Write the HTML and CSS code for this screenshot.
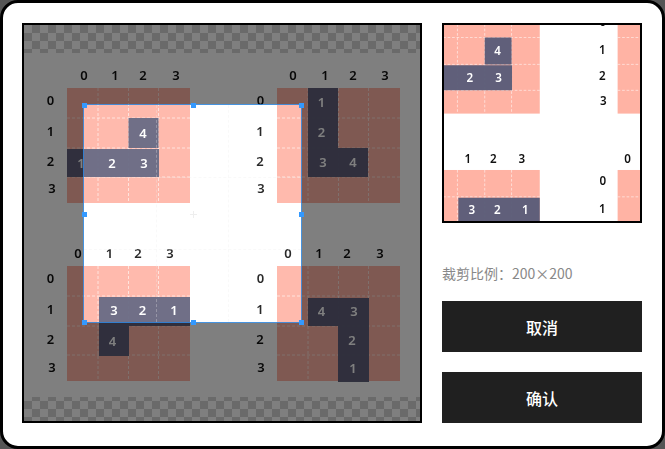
FILE: index.html
```html
<!DOCTYPE html>
<html lang="zh">
  <head>
    <meta charset="utf-8">
    <title>裁剪图片</title>
    <link rel="stylesheet" href="styles.css">
  </head>
  <body>
    <div class="modal">
      <div class="cropper">
        <!-- the picture being cropped, drawn in page coordinates -->
        <svg class="art" viewBox="24 25 396 396">
          <defs>
            <pattern id="checker" x="24" y="25" width="16" height="16" patternUnits="userSpaceOnUse">
              <rect class="tile-light" width="16" height="16" />
              <rect class="tile-dark" x="8" width="8" height="8" />
              <rect class="tile-dark" y="8" width="8" height="8" />
            </pattern>
            <g id="field">
              <rect class="pink" width="123" height="115" />
              <path class="dash" d="M31 0V115M61.5 0V115M91.5 0V115M0 30H123M0 60H123M0 89H123" />
            </g>
          </defs>
          <g id="picture">
            <rect class="paper" x="24" y="25" width="396" height="396" />
            <rect fill="url(#checker)" x="24" y="25" width="396" height="28" />
            <rect fill="url(#checker)" x="24" y="397" width="396" height="24" />

            <!-- board top left -->
            <use href="#field" x="67" y="88" />
            <path class="slate" d="M128.5 118H158.5V148H128.5ZM67 149H159V177H67Z" />
            <text class="head" x="84" y="80">0</text>
            <text class="head" x="115" y="80">1</text>
            <text class="head" x="143" y="80">2</text>
            <text class="head" x="176" y="80">3</text>
            <text class="head" x="50.500" y="105">0</text>
            <text class="head" x="50.500" y="136">1</text>
            <text class="head" x="50.500" y="166">2</text>
            <text class="head" x="52" y="193">3</text>
            <text class="num" x="81" y="168">1</text>
            <text class="num" x="112" y="168">2</text>
            <text class="num" x="144" y="168">3</text>
            <text class="num" x="143" y="138">4</text>

            <!-- board top right -->
            <use href="#field" x="277" y="88" />
            <path class="slate" d="M308 88H338V148H368V177H308Z" />
            <text class="head" x="293" y="80">0</text>
            <text class="head" x="325" y="80">1</text>
            <text class="head" x="353" y="80">2</text>
            <text class="head" x="385" y="80">3</text>
            <text class="head" x="260.500" y="105">0</text>
            <text class="head" x="260" y="136">1</text>
            <text class="head" x="260" y="166">2</text>
            <text class="head" x="261" y="193">3</text>
            <text class="num" x="321.500" y="107">1</text>
            <text class="num" x="321.500" y="137">2</text>
            <text class="num" x="323" y="167">3</text>
            <text class="num" x="353" y="167">4</text>

            <!-- board bottom left -->
            <use href="#field" x="67" y="266" />
            <path class="slate" d="M99 297H190V326H129V356H99Z" />
            <text class="head" x="78" y="258">0</text>
            <text class="head" x="109.500" y="258">1</text>
            <text class="head" x="138" y="258">2</text>
            <text class="head" x="170" y="258">3</text>
            <text class="head" x="50.500" y="283">0</text>
            <text class="head" x="50.500" y="314">1</text>
            <text class="head" x="50.500" y="344">2</text>
            <text class="head" x="52" y="372">3</text>
            <text class="num" x="114" y="315">3</text>
            <text class="num" x="142.500" y="315">2</text>
            <text class="num" x="174" y="315">1</text>
            <text class="num" x="112.500" y="346">4</text>

            <!-- board bottom right -->
            <use href="#field" x="277" y="266" />
            <path class="slate" d="M308 298H369V382H338V326H308Z" />
            <text class="head" x="288" y="258">0</text>
            <text class="head" x="319" y="258">1</text>
            <text class="head" x="347" y="258">2</text>
            <text class="head" x="380" y="258">3</text>
            <text class="head" x="260.500" y="283">0</text>
            <text class="head" x="260" y="314">1</text>
            <text class="head" x="260" y="344">2</text>
            <text class="head" x="261" y="372">3</text>
            <text class="num" x="321.500" y="316">4</text>
            <text class="num" x="354" y="316">3</text>
            <text class="num" x="352" y="345">2</text>
            <text class="num" x="353" y="372.500">1</text>
          </g>
        </svg>

        <div class="crop-box">
          <span class="guide guide-h"></span>
          <span class="guide guide-v"></span>
          <span class="cross"></span>
          <span class="point p-n"></span>
          <span class="point p-e"></span>
          <span class="point p-s"></span>
          <span class="point p-w"></span>
          <span class="point p-nw"></span>
          <span class="point p-ne"></span>
          <span class="point p-se"></span>
          <span class="point p-sw"></span>
        </div>
      </div>

      <div class="side">
        <div class="preview">
          <svg class="art" viewBox="83 104 219 219">
            <use href="#picture" />
          </svg>
        </div>
        <p class="ratio">裁剪比例：200×200</p>
        <button class="btn" type="button">取消</button>
        <button class="btn" type="button">确认</button>
      </div>
    </div>
  </body>
</html>
```

FILE: styles.css
```css
* {
  box-sizing: border-box;
}
html, body {
  margin: 0;
  height: 100%;
  background: #555;
}
.modal {
  display: flex;
  gap: 20px;
  width: 665px;
  height: 449px;
  padding: 20px 20px 20px 19px;
  background: #fff;
  border: 3px solid #000;
  border-radius: 18px;
  font-family: "Noto Sans CJK SC", "Noto Sans", sans-serif;
}

/* cropper */
.cropper {
  position: relative;
  flex: none;
  width: 400px;
  height: 400px;
  border: 2px solid #000;
  overflow: hidden;
}
.art {
  display: block;
  width: 100%;
  height: 100%;
  filter: blur(0.4px);
}
.paper, .tile-light {
  fill: #fff;
}
.tile-dark {
  fill: #d4d4d4;
}
.pink {
  fill: #ffb3a4;
}
.slate {
  fill: #5a5c78;
  fill-opacity: 0.96;
}
.dash {
  fill: none;
  stroke: #fff;
  stroke-opacity: 0.6;
  stroke-dasharray: 3 2;
}
.head, .num {
  font-family: "Noto Sans", sans-serif;
  font-size: 13px;
  font-weight: 600;
  text-anchor: middle;
}
.head {
  fill: #111;
}
.num {
  fill: #fff;
}

.crop-box {
  position: absolute;
  left: 60px;
  top: 80px;
  width: 217px;
  height: 217px;
  background: rgba(255, 255, 255, 0.1);
  outline: 1px solid rgba(51, 153, 255, 0.75);
  box-shadow: 0 0 0 400px rgba(0, 0, 0, 0.5);
}
.guide {
  position: absolute;
  border: 0 dashed #eee;
  opacity: 0.3;
}
.guide-h {
  left: 0;
  top: 33.33%;
  width: 100%;
  height: 33.33%;
  border-width: 1px 0;
}
.guide-v {
  left: 33.33%;
  top: 0;
  width: 33.33%;
  height: 100%;
  border-width: 0 1px;
}
.cross {
  position: absolute;
  left: 50%;
  top: 50%;
  width: 7px;
  height: 7px;
  margin: -3px 0 0 -3px;
  background:
    linear-gradient(#eee, #eee) center / 7px 1px no-repeat,
    linear-gradient(#eee, #eee) center / 1px 7px no-repeat;
}
.point {
  position: absolute;
  width: 5px;
  height: 5px;
  margin: -2px 0 0 -2px;
  background: #39f;
}
.p-n { left: 50%; top: 0; }
.p-e { left: 100%; top: 50%; }
.p-s { left: 50%; top: 100%; }
.p-w { left: 0; top: 50%; }
.p-nw { left: 0; top: 0; }
.p-ne { left: 100%; top: 0; }
.p-se { left: 100%; top: 100%; }
.p-sw { left: 0; top: 100%; }

/* right column */
.side {
  display: flex;
  flex-direction: column;
  flex: none;
  width: 200px;
}
.preview {
  flex: none;
  width: 200px;
  height: 200px;
  border: 2px solid #000;
  overflow: hidden;
}
.ratio {
  flex: none;
  margin: 39px 0 17px;
  font-size: 14px;
  line-height: 22px;
  color: #888;
}
.btn {
  flex: none;
  height: 51px;
  padding: 0;
  border: 0;
  background: #202020;
  color: #fff;
  font-family: inherit;
  font-size: 16px;
  font-weight: 500;
}
.btn + .btn {
  margin-top: 20px;
}
```
